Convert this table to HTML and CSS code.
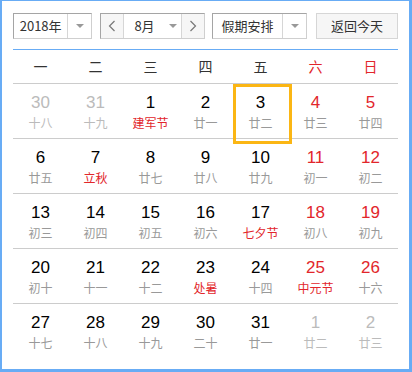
FILE: index.html
```html
<!DOCTYPE html>
<html lang="zh">
<head>
<meta charset="utf-8">
<link rel="stylesheet" href="styles.css">
</head>
<body>
<div class="frame">
  <div class="toolbar">
    <div class="select year">
      <span class="sel-text">2018年</span>
      <span class="sel-arrow"><i class="tri"></i></span>
    </div>
    <div class="group month">
      <span class="nav"><svg width="8" height="12" viewBox="0 0 8 12"><polyline points="6.5,1 1.5,6 6.5,11" fill="none" stroke="#777" stroke-width="1.2"/></svg></span>
      <span class="sel-text mid">8月<i class="tri inline"></i></span>
      <span class="nav"><svg width="8" height="12" viewBox="0 0 8 12"><polyline points="1.5,1 6.5,6 1.5,11" fill="none" stroke="#777" stroke-width="1.2"/></svg></span>
    </div>
    <div class="select holiday">
      <span class="sel-text">假期安排</span>
      <span class="sel-arrow"><i class="tri"></i></span>
    </div>
    <div class="btn">返回今天</div>
  </div>

  <div class="cal">
    <div class="weekdays">
      <span>一</span><span>二</span><span>三</span><span>四</span><span>五</span><span class="red">六</span><span class="red">日</span>
    </div>
    <div class="week">
      <div class="day other"><b>30</b><small>十八</small></div>
      <div class="day other"><b>31</b><small>十九</small></div>
      <div class="day"><b>1</b><small class="fest">建军节</small></div>
      <div class="day"><b>2</b><small>廿一</small></div>
      <div class="day today"><b>3</b><small>廿二</small></div>
      <div class="day wk"><b>4</b><small>廿三</small></div>
      <div class="day wk"><b>5</b><small>廿四</small></div>
    </div>
    <div class="week">
      <div class="day"><b>6</b><small>廿五</small></div>
      <div class="day"><b>7</b><small class="fest">立秋</small></div>
      <div class="day"><b>8</b><small>廿七</small></div>
      <div class="day"><b>9</b><small>廿八</small></div>
      <div class="day"><b>10</b><small>廿九</small></div>
      <div class="day wk"><b>11</b><small>初一</small></div>
      <div class="day wk"><b>12</b><small>初二</small></div>
    </div>
    <div class="week">
      <div class="day"><b>13</b><small>初三</small></div>
      <div class="day"><b>14</b><small>初四</small></div>
      <div class="day"><b>15</b><small>初五</small></div>
      <div class="day"><b>16</b><small>初六</small></div>
      <div class="day"><b>17</b><small class="fest">七夕节</small></div>
      <div class="day wk"><b>18</b><small>初八</small></div>
      <div class="day wk"><b>19</b><small>初九</small></div>
    </div>
    <div class="week">
      <div class="day"><b>20</b><small>初十</small></div>
      <div class="day"><b>21</b><small>十一</small></div>
      <div class="day"><b>22</b><small>十二</small></div>
      <div class="day"><b>23</b><small class="fest">处暑</small></div>
      <div class="day"><b>24</b><small>十四</small></div>
      <div class="day wk"><b>25</b><small class="fest">中元节</small></div>
      <div class="day wk"><b>26</b><small>十六</small></div>
    </div>
    <div class="week last">
      <div class="day"><b>27</b><small>十七</small></div>
      <div class="day"><b>28</b><small>十八</small></div>
      <div class="day"><b>29</b><small>十九</small></div>
      <div class="day"><b>30</b><small>二十</small></div>
      <div class="day"><b>31</b><small>廿一</small></div>
      <div class="day other"><b>1</b><small>廿二</small></div>
      <div class="day other"><b>2</b><small>廿三</small></div>
    </div>
  </div>
</div>
</body>
</html>
```

FILE: styles.css
```css
* { box-sizing: border-box; margin: 0; padding: 0; }
html, body { width: 412px; height: 372px; background: #fff; }
body { font-family: "Noto Sans CJK SC", "Liberation Sans", sans-serif; color: #333; }

.frame {
  width: 412px;
  height: 372px;
  border-style: solid;
  border-color: #68acf5;
  border-width: 1px 3px 3px 2px;
  padding: 12px 11px 0 11px;
}

.toolbar {
  display: flex;
  height: 26px;
  margin-bottom: 10px;
}

.select, .group, .btn {
  display: flex;
  height: 26px;
  border: 1px solid #cfcfcf;
  border-top-color: #a5a5a5;
  border-left-color: #a5a5a5;
  font-size: 13px;
  line-height: 24px;
  color: #333;
}

.sel-text {
  display: flex;
  align-items: center;
  justify-content: center;
}
.sel-arrow {
  display: flex;
  align-items: center;
  justify-content: center;
  border-left: 1px solid #d6d6d6;
  width: 24px;
}
.tri {
  display: block;
  width: 0;
  height: 0;
  border-left: 4px solid transparent;
  border-right: 4px solid transparent;
  border-top: 4px solid #999;
}
.tri.inline { margin-left: 14px; }

.year { width: 79px; }
.year .sel-text { width: 54px; }

.month { width: 105px; margin-left: 8px; }
.nav {
  display: flex;
  align-items: center;
  justify-content: center;
  width: 22px;
  background: #f6f6f6;
}
.nav + .sel-text { border-left: 1px solid #d6d6d6; }
.mid { width: 60px; border-right: 1px solid #d6d6d6; padding-left: 6px; }

.holiday { width: 95px; margin-left: 7px; }
.holiday .sel-text { width: 70px; }

.btn {
  width: 82px;
  margin-left: 9px;
  justify-content: center;
  background: #f6f6f6;
  border-color: #d6d6d6;
}

.cal {
  width: 385px;
  border-top: 1px solid #68acf5;
}

.weekdays {
  display: grid;
  grid-template-columns: repeat(7, 55px);
  height: 34px;
  border-bottom: 1px solid #cccccc;
  font-size: 14px;
  line-height: 32px;
  text-align: center;
  color: #333;
}
.red { color: #e2262b; }

.week {
  display: grid;
  grid-template-columns: repeat(7, 55px);
  height: 55px;
  border-bottom: 1px solid #cccccc;
}
.week.last { border-bottom: none; }

.day {
  position: relative;
  display: flex;
  flex-direction: column;
  align-items: center;
  padding-top: 9px;
}
.day b {
  font-family: "Liberation Sans", Arial, sans-serif;
  font-weight: normal;
  font-size: 17px;
  line-height: 20px;
  color: #000;
}
.day small {
  margin-top: 2px;
  font-size: 12px;
  line-height: 16px;
  color: #999;
}
.day small.fest { color: #e2262b; }
.day.wk b { color: #e2262b; }
.day.other b { color: #bbbbbb; }
.day.other small { color: #bbbbbb; }

.day.today::after {
  content: "";
  position: absolute;
  left: 0;
  top: 0;
  width: 53px;
  height: 54px;
  border: 3px solid #fbb614;
}
```
